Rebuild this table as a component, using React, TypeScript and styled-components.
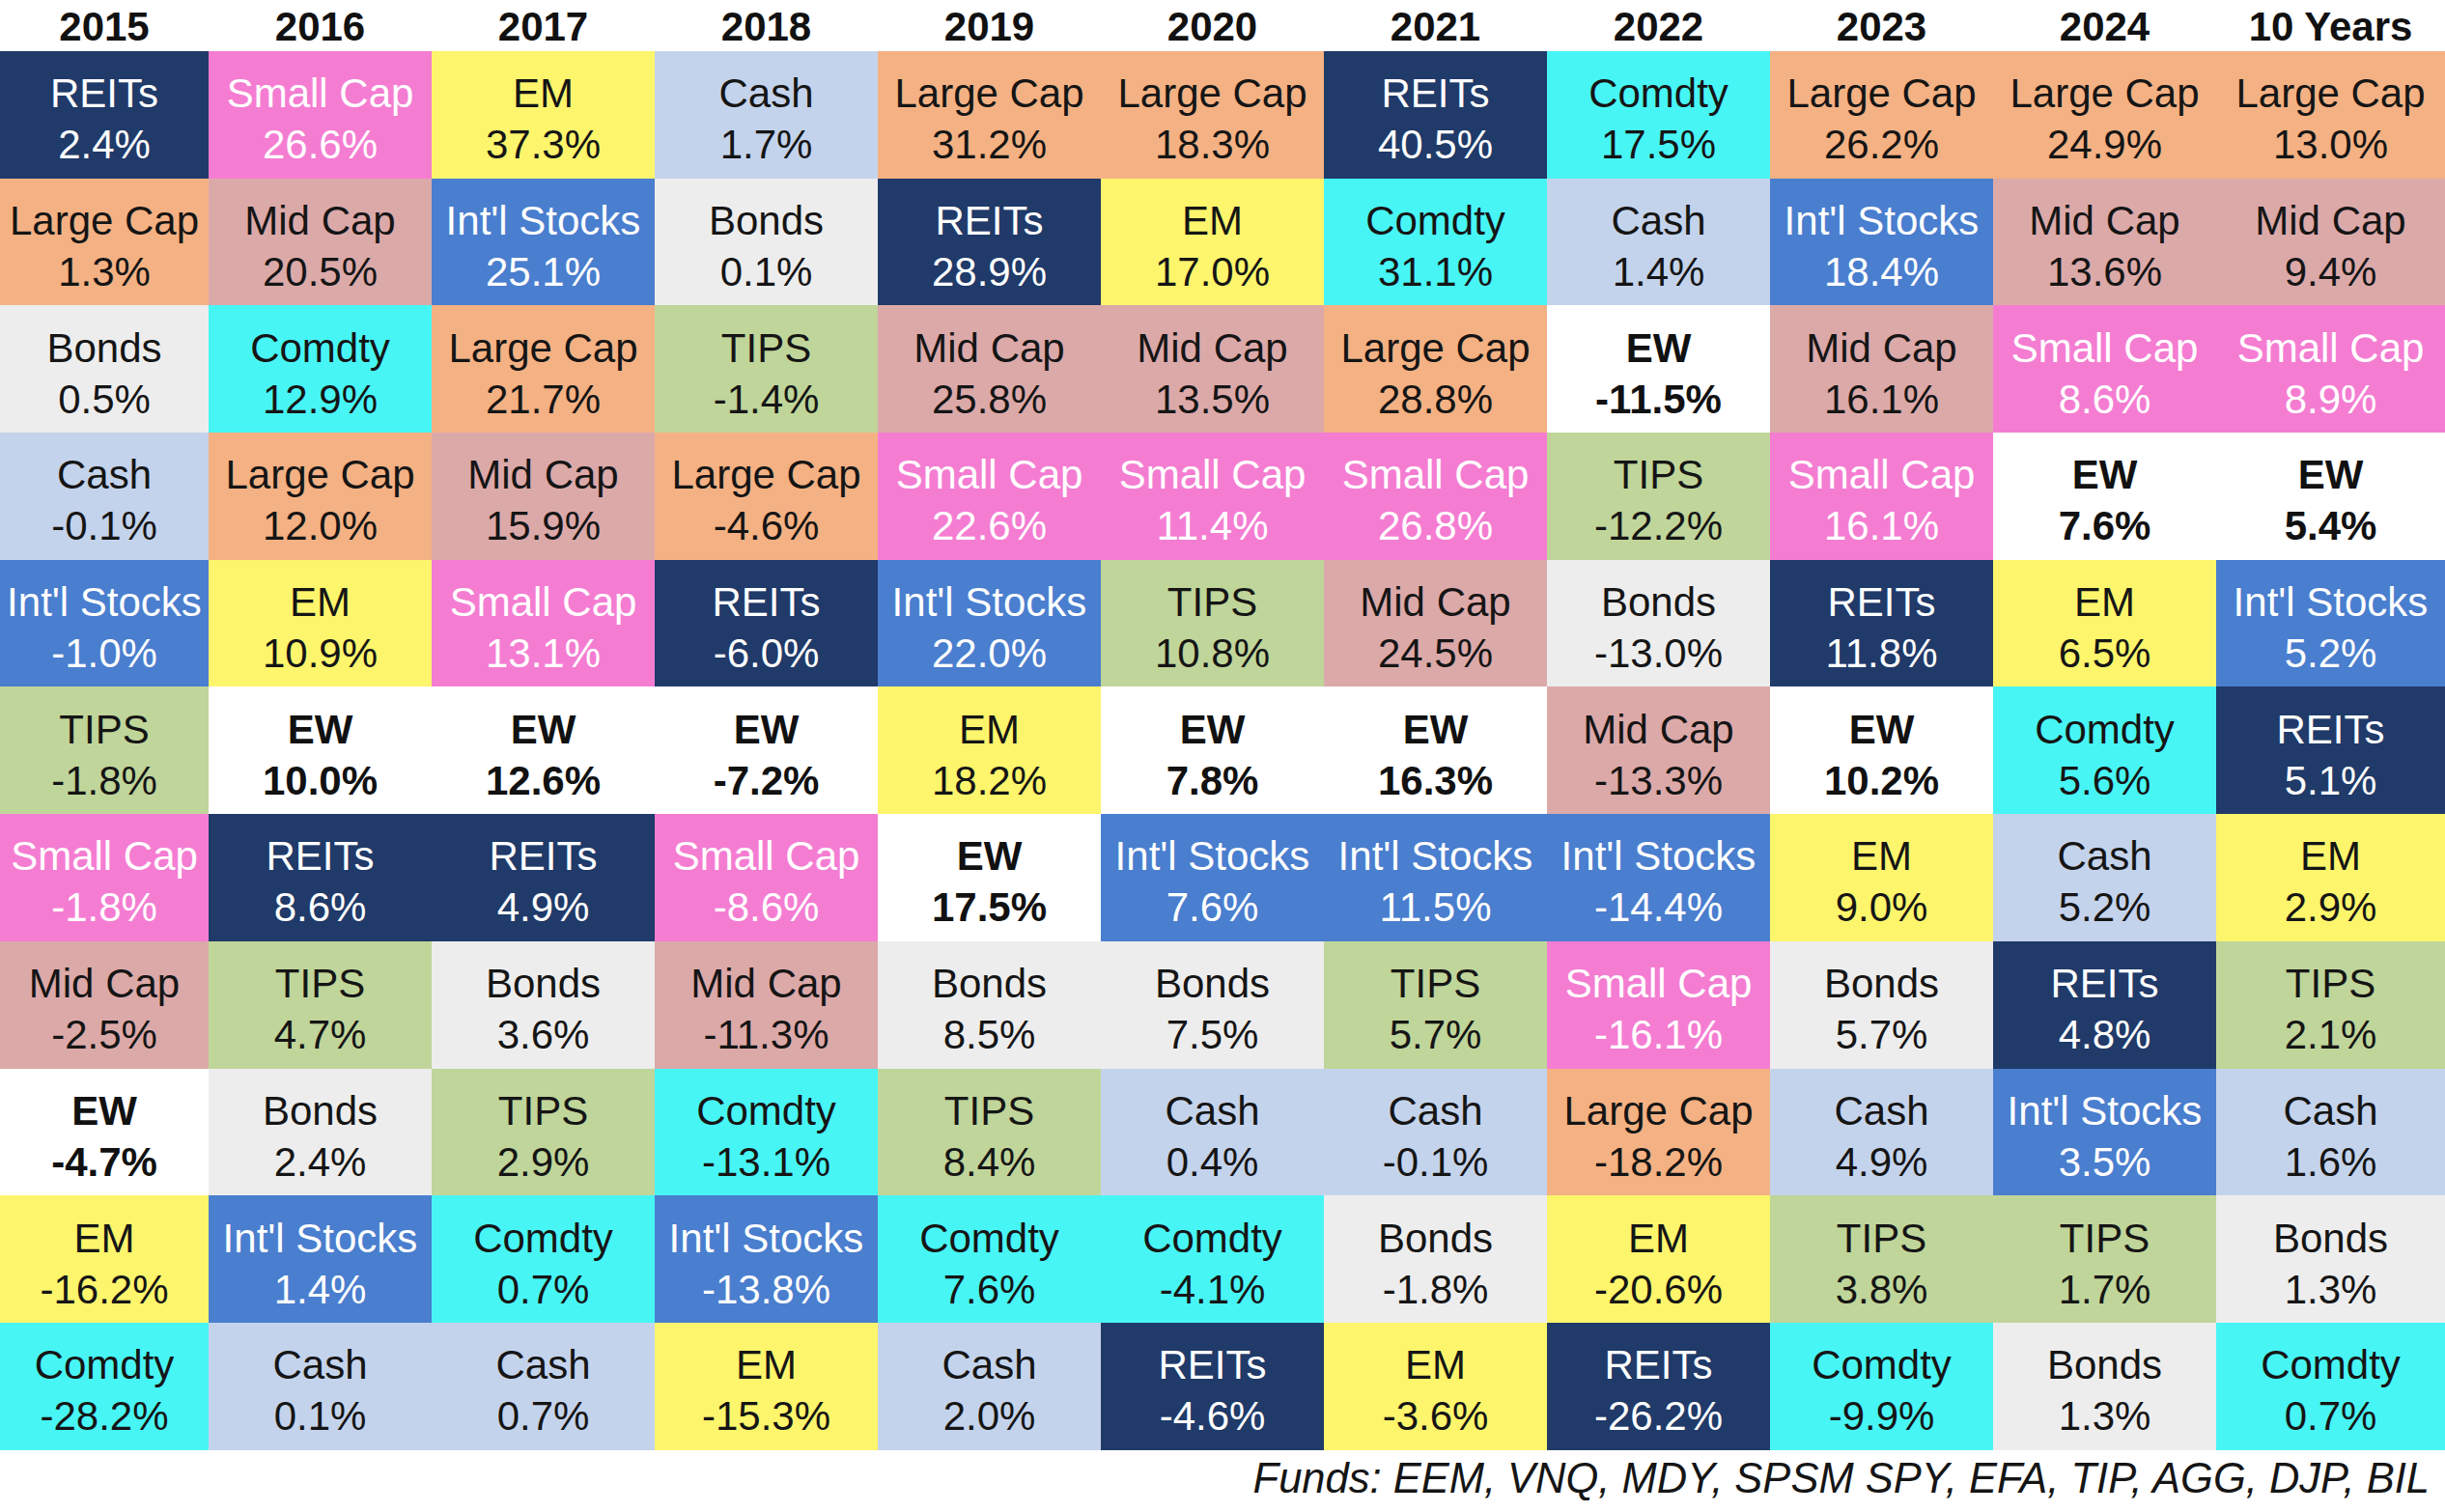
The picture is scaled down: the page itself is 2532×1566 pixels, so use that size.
import React from "react";
import styled, { createGlobalStyle } from "styled-components";

const GlobalStyle = createGlobalStyle`
  html, body {
    margin: 0;
    padding: 0;
    background: #ffffff;
  }
  body {
    font-family: "Liberation Sans", Arial, sans-serif;
    color: #151515;
  }
`;

type AssetKey =
  | "REITs"
  | "Small Cap"
  | "EM"
  | "Cash"
  | "Large Cap"
  | "Comdty"
  | "Mid Cap"
  | "Int'l Stocks"
  | "Bonds"
  | "TIPS"
  | "EW";

const palette: Record<AssetKey, { bg: string; fg: string; bold?: boolean }> = {
  REITs: { bg: "#203a69", fg: "#ffffff" },
  "Small Cap": { bg: "#f47dd2", fg: "#ffffff" },
  EM: { bg: "#fdf56c", fg: "#151515" },
  Cash: { bg: "#c4d3ec", fg: "#151515" },
  "Large Cap": { bg: "#f4b183", fg: "#151515" },
  Comdty: { bg: "#48f5f5", fg: "#151515" },
  "Mid Cap": { bg: "#dca9a9", fg: "#151515" },
  "Int'l Stocks": { bg: "#4a7ece", fg: "#ffffff" },
  Bonds: { bg: "#ededed", fg: "#151515" },
  TIPS: { bg: "#c0d59a", fg: "#151515" },
  EW: { bg: "#ffffff", fg: "#111111", bold: true },
};

type Entry = [AssetKey, string];

const columns: { year: string; rows: Entry[] }[] = [
  {
    year: "2015",
    rows: [
      ["REITs", "2.4%"],
      ["Large Cap", "1.3%"],
      ["Bonds", "0.5%"],
      ["Cash", "-0.1%"],
      ["Int'l Stocks", "-1.0%"],
      ["TIPS", "-1.8%"],
      ["Small Cap", "-1.8%"],
      ["Mid Cap", "-2.5%"],
      ["EW", "-4.7%"],
      ["EM", "-16.2%"],
      ["Comdty", "-28.2%"],
    ],
  },
  {
    year: "2016",
    rows: [
      ["Small Cap", "26.6%"],
      ["Mid Cap", "20.5%"],
      ["Comdty", "12.9%"],
      ["Large Cap", "12.0%"],
      ["EM", "10.9%"],
      ["EW", "10.0%"],
      ["REITs", "8.6%"],
      ["TIPS", "4.7%"],
      ["Bonds", "2.4%"],
      ["Int'l Stocks", "1.4%"],
      ["Cash", "0.1%"],
    ],
  },
  {
    year: "2017",
    rows: [
      ["EM", "37.3%"],
      ["Int'l Stocks", "25.1%"],
      ["Large Cap", "21.7%"],
      ["Mid Cap", "15.9%"],
      ["Small Cap", "13.1%"],
      ["EW", "12.6%"],
      ["REITs", "4.9%"],
      ["Bonds", "3.6%"],
      ["TIPS", "2.9%"],
      ["Comdty", "0.7%"],
      ["Cash", "0.7%"],
    ],
  },
  {
    year: "2018",
    rows: [
      ["Cash", "1.7%"],
      ["Bonds", "0.1%"],
      ["TIPS", "-1.4%"],
      ["Large Cap", "-4.6%"],
      ["REITs", "-6.0%"],
      ["EW", "-7.2%"],
      ["Small Cap", "-8.6%"],
      ["Mid Cap", "-11.3%"],
      ["Comdty", "-13.1%"],
      ["Int'l Stocks", "-13.8%"],
      ["EM", "-15.3%"],
    ],
  },
  {
    year: "2019",
    rows: [
      ["Large Cap", "31.2%"],
      ["REITs", "28.9%"],
      ["Mid Cap", "25.8%"],
      ["Small Cap", "22.6%"],
      ["Int'l Stocks", "22.0%"],
      ["EM", "18.2%"],
      ["EW", "17.5%"],
      ["Bonds", "8.5%"],
      ["TIPS", "8.4%"],
      ["Comdty", "7.6%"],
      ["Cash", "2.0%"],
    ],
  },
  {
    year: "2020",
    rows: [
      ["Large Cap", "18.3%"],
      ["EM", "17.0%"],
      ["Mid Cap", "13.5%"],
      ["Small Cap", "11.4%"],
      ["TIPS", "10.8%"],
      ["EW", "7.8%"],
      ["Int'l Stocks", "7.6%"],
      ["Bonds", "7.5%"],
      ["Cash", "0.4%"],
      ["Comdty", "-4.1%"],
      ["REITs", "-4.6%"],
    ],
  },
  {
    year: "2021",
    rows: [
      ["REITs", "40.5%"],
      ["Comdty", "31.1%"],
      ["Large Cap", "28.8%"],
      ["Small Cap", "26.8%"],
      ["Mid Cap", "24.5%"],
      ["EW", "16.3%"],
      ["Int'l Stocks", "11.5%"],
      ["TIPS", "5.7%"],
      ["Cash", "-0.1%"],
      ["Bonds", "-1.8%"],
      ["EM", "-3.6%"],
    ],
  },
  {
    year: "2022",
    rows: [
      ["Comdty", "17.5%"],
      ["Cash", "1.4%"],
      ["EW", "-11.5%"],
      ["TIPS", "-12.2%"],
      ["Bonds", "-13.0%"],
      ["Mid Cap", "-13.3%"],
      ["Int'l Stocks", "-14.4%"],
      ["Small Cap", "-16.1%"],
      ["Large Cap", "-18.2%"],
      ["EM", "-20.6%"],
      ["REITs", "-26.2%"],
    ],
  },
  {
    year: "2023",
    rows: [
      ["Large Cap", "26.2%"],
      ["Int'l Stocks", "18.4%"],
      ["Mid Cap", "16.1%"],
      ["Small Cap", "16.1%"],
      ["REITs", "11.8%"],
      ["EW", "10.2%"],
      ["EM", "9.0%"],
      ["Bonds", "5.7%"],
      ["Cash", "4.9%"],
      ["TIPS", "3.8%"],
      ["Comdty", "-9.9%"],
    ],
  },
  {
    year: "2024",
    rows: [
      ["Large Cap", "24.9%"],
      ["Mid Cap", "13.6%"],
      ["Small Cap", "8.6%"],
      ["EW", "7.6%"],
      ["EM", "6.5%"],
      ["Comdty", "5.6%"],
      ["Cash", "5.2%"],
      ["REITs", "4.8%"],
      ["Int'l Stocks", "3.5%"],
      ["TIPS", "1.7%"],
      ["Bonds", "1.3%"],
    ],
  },
  {
    year: "10 Years",
    rows: [
      ["Large Cap", "13.0%"],
      ["Mid Cap", "9.4%"],
      ["Small Cap", "8.9%"],
      ["EW", "5.4%"],
      ["Int'l Stocks", "5.2%"],
      ["REITs", "5.1%"],
      ["EM", "2.9%"],
      ["TIPS", "2.1%"],
      ["Cash", "1.6%"],
      ["Bonds", "1.3%"],
      ["Comdty", "0.7%"],
    ],
  },
];

const Page = styled.div`
  width: 2532px;
  height: 1566px;
  display: flex;
  flex-direction: column;
  background: #ffffff;
  overflow: hidden;
`;

const Table = styled.div`
  display: grid;
  grid-template-columns: 216px repeat(9, 231px) 1fr;
  grid-template-rows: 53px repeat(11, 131.7px);
  grid-auto-flow: column;
`;

const YearHeader = styled.div`
  display: flex;
  align-items: center;
  justify-content: center;
  padding-top: 2px;
  font-size: 42px;
  font-weight: 700;
  color: #111111;
  white-space: nowrap;
`;

const Cell = styled.div<{ $bg: string; $fg: string; $bold?: boolean }>`
  display: flex;
  flex-direction: column;
  align-items: center;
  justify-content: center;
  padding-top: 9px;
  box-sizing: border-box;
  background: ${(p) => p.$bg};
  color: ${(p) => p.$fg};
  font-size: 42px;
  line-height: 53px;
  font-weight: ${(p) => (p.$bold ? 700 : 400)};
  white-space: nowrap;
`;

const Line = styled.span`
  display: block;
`;

const Footer = styled.div`
  flex: 1;
  display: flex;
  align-items: flex-start;
  justify-content: flex-end;
  padding: 5px 16px 0 0;
  font-size: 43.5px;
  font-style: italic;
  color: #151515;
  white-space: nowrap;
`;

export default function App() {
  return (
    <>
      <GlobalStyle />
      <Page>
        <Table>
          {columns.map((col) => (
            <React.Fragment key={col.year}>
              <YearHeader>{col.year}</YearHeader>
              {col.rows.map(([name, value], i) => {
                const c = palette[name];
                return (
                  <Cell key={i} $bg={c.bg} $fg={c.fg} $bold={c.bold}>
                    <Line>{name}</Line>
                    <Line>{value}</Line>
                  </Cell>
                );
              })}
            </React.Fragment>
          ))}
        </Table>
        <Footer>Funds: EEM, VNQ, MDY, SPSM SPY, EFA, TIP, AGG, DJP, BIL</Footer>
      </Page>
    </>
  );
}
